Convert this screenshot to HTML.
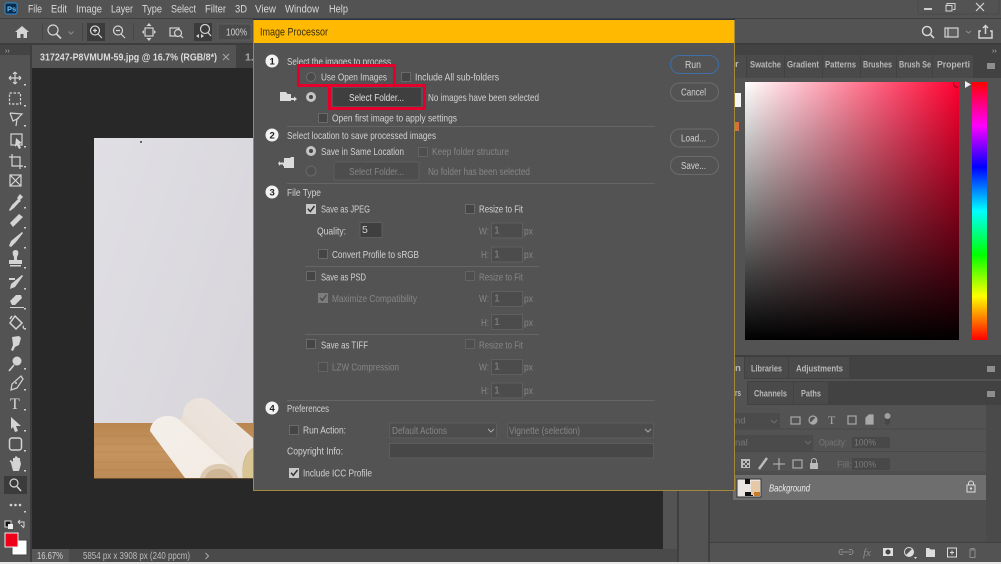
<!DOCTYPE html>
<html><head><meta charset="utf-8"><style>
html,body{margin:0;padding:0;background:#535353;width:1001px;height:564px;overflow:hidden}
svg{display:block;filter:blur(.3px)}
text{font-family:"Liberation Sans",sans-serif;font-size:10.5px;fill:#d2d2d2}
.d{fill:#868686}
.m{fill:#d8d8d8;font-size:11px}
.b{font-weight:bold;fill:#b8b8b8;font-size:9.5px}
.i{fill:none;stroke:#d4d4d4;stroke-width:1.2}
.f{fill:#d4d4d4;stroke:none}
.ck{fill:#454545;stroke:#6a6a6a;stroke-width:1}
.ckd{fill:#4e4e4e;stroke:#636363;stroke-width:1}
.in{fill:#4c4c4c;stroke:#5f5f5f;stroke-width:1}
.ln{stroke:#656565;stroke-width:1}
</style></head><body>
<svg width="1001" height="564" viewBox="0 0 1001 564" xmlns="http://www.w3.org/2000/svg">
<defs>
<linearGradient id="h" x1="0" x2="1" y1="0" y2="0"><stop offset="0" stop-color="#fff"/><stop offset="1" stop-color="#ff0030"/></linearGradient>
<linearGradient id="v" x1="0" x2="0" y1="0" y2="1"><stop offset="0" stop-color="#000" stop-opacity="0"/><stop offset="1" stop-color="#000"/></linearGradient>
<linearGradient id="hue" x1="0" x2="0" y1="0" y2="1"><stop offset="0" stop-color="#f00"/><stop offset=".17" stop-color="#f0f"/><stop offset=".33" stop-color="#00f"/><stop offset=".5" stop-color="#0ff"/><stop offset=".67" stop-color="#0f0"/><stop offset=".83" stop-color="#ff0"/><stop offset="1" stop-color="#f00"/></linearGradient>
<linearGradient id="wall" x1="0" x2="1" y1="0" y2="0.6"><stop offset="0" stop-color="#e0dfe4"/><stop offset="1" stop-color="#d8d6db"/></linearGradient>
<linearGradient id="wood" x1="0" x2="0" y1="0" y2="1"><stop offset="0" stop-color="#b98650"/><stop offset=".5" stop-color="#c6955f"/><stop offset="1" stop-color="#bb8955"/></linearGradient>
<linearGradient id="r1" x1="0" x2="1" y1="0" y2="1"><stop offset="0" stop-color="#f4efea"/><stop offset="1" stop-color="#f3ebe3"/></linearGradient>
<linearGradient id="r2" x1="1" x2="0" y1="0" y2="1"><stop offset="0" stop-color="#ece5e0"/><stop offset=".55" stop-color="#ebe2da"/><stop offset="1" stop-color="#dcc7a8"/></linearGradient>
</defs>

<!-- base -->
<rect width="1001" height="564" fill="#535353"/>
<rect y="18" width="1001" height="1" fill="#3f3f3f"/>
<rect y="43" width="1001" height="2" fill="#3d3d3d"/>
<rect x="30" y="45" width="680" height="23" fill="#414141"/>
<rect x="32" y="45" width="204" height="23" fill="#535353"/>
<rect x="32" y="68" width="631" height="481" fill="#282828"/>
<rect x="0" y="45" width="30" height="519" fill="#535353"/>
<rect x="30" y="45" width="2" height="519" fill="#3e3e3e"/>
<rect x="0" y="45" width="30" height="10" fill="#444"/>
<rect x="677" y="68" width="2" height="494" fill="#3f3f3f"/>
<rect x="708" y="45" width="2" height="517" fill="#3f3f3f"/>
<rect x="32" y="549" width="645" height="13" fill="#4a4a4a"/>
<rect x="32" y="549" width="37" height="13" fill="#575757"/>
<rect y="562" width="1001" height="2" fill="#e8e8e8"/>

<!-- photo -->
<rect x="94" y="138" width="170" height="286" fill="url(#wall)"/>
<rect x="140" y="141" width="2" height="2" fill="#666"/>
<rect x="94" y="423" width="170" height="56" fill="url(#wood)"/>
<path d="M94 436H150M94 444H165M94 452H172M94 462H180M94 470H188" stroke="#a87744" stroke-opacity=".35" fill="none"/>
<rect x="94" y="478" width="170" height="1" fill="#6a5030"/>
<path d="M183 414C184 403 192 398 201 398C207 398 212 402 217 407L253 438V448C245 452 241 465 243 478H237L180 422Z" fill="url(#r2)"/>
<path d="M253 448C246 452 241 465 243 478H253Z" fill="#d9c594"/>
<path d="M150 431C151 421 159 416 168 416C174 416 178 418 183 423L229 465L238 478H185Z" fill="url(#r1)"/>
<path d="M200 478C202 468 212 463 222 464C230 465 236 471 238 478Z" fill="#dccab2"/>
<path d="M205 478C207 471 214 468 221 469C227 470 231 474 233 478Z" fill="#cdb596"/>

<!-- top menu -->
<rect x="5" y="3" width="12" height="11" rx="2" fill="#0a2a4a" stroke="#2f8fd8" stroke-width="1"/>
<text x="7" y="11.500" style="font-size:7.500px;font-weight:bold;fill:#6cc0f8">Ps</text>
<text class="m" x="28" y="12.500" textLength="14" lengthAdjust="spacingAndGlyphs">File</text>
<text class="m" x="51" y="12.500" textLength="16" lengthAdjust="spacingAndGlyphs">Edit</text>
<text class="m" x="76" y="12.500" textLength="26" lengthAdjust="spacingAndGlyphs">Image</text>
<text class="m" x="111" y="12.500" textLength="22" lengthAdjust="spacingAndGlyphs">Layer</text>
<text class="m" x="142" y="12.500" textLength="20" lengthAdjust="spacingAndGlyphs">Type</text>
<text class="m" x="171" y="12.500" textLength="25" lengthAdjust="spacingAndGlyphs">Select</text>
<text class="m" x="205" y="12.500" textLength="21" lengthAdjust="spacingAndGlyphs">Filter</text>
<text class="m" x="235" y="12.500" textLength="12" lengthAdjust="spacingAndGlyphs">3D</text>
<text class="m" x="255" y="12.500" textLength="21" lengthAdjust="spacingAndGlyphs">View</text>
<text class="m" x="285" y="12.500" textLength="34" lengthAdjust="spacingAndGlyphs">Window</text>
<text class="m" x="329" y="12.500" textLength="19" lengthAdjust="spacingAndGlyphs">Help</text>

<!-- window buttons -->
<rect x="918" y="-2" width="81" height="16" rx="2" fill="none" stroke="#4a4a4a"/>
<rect x="924" y="8" width="8" height="2" fill="#cfcfcf"/>
<path class="i" d="M947 5V3.500H955V9.500H953M946 5.500H952V11H946Z" style="stroke-width:1"/>
<path class="i" d="M976 3L984 11M984 3L976 11"/>

<!-- options bar -->
<path class="f" d="M22 26L29 32H27V38H23.500V34H20.500V38H17V32H15Z"/>
<rect x="42" y="23" width="1" height="18" fill="#454545"/>
<circle cx="53" cy="30" r="5" class="i"/><path class="i" d="M56.500 34L61 38.500" style="stroke-width:1.600"/>
<path class="i" d="M68.500 31.500L71 34L73.500 31.500" style="stroke:#8f8f8f;stroke-width:1"/>
<rect x="82" y="23" width="1" height="18" fill="#454545"/>
<rect x="87" y="23" width="18" height="18" fill="#3b3b3b"/>
<circle cx="95" cy="30.500" r="4.500" class="i"/><path class="i" d="M98 34L102 38M93 30.500H97M95 28.500V32.500"/>
<circle cx="118" cy="30.500" r="4.500" class="i"/><path class="i" d="M121 34L125 38M116 30.500H120"/>
<rect x="133" y="23" width="1" height="18" fill="#454545"/>
<rect x="145" y="28" width="8" height="8" class="i"/><path class="f" d="M149 23L151.500 26H146.500ZM149 41L146.500 38H151.500ZM142 32L144 30V34ZM156 32L154 30V34Z"/>
<rect x="170" y="28" width="9" height="8" class="i"/><circle cx="178" cy="33" r="3.500" class="i" style="fill:#535353"/><path class="i" d="M180.500 35.500L183 38"/>
<rect x="194" y="23" width="18" height="18" fill="#3b3b3b"/>
<circle cx="205" cy="29" r="4.500" class="i"/><path class="i" d="M208 32.500L211 36"/><path class="f" d="M196 36L199 34V38ZM204 36L201 34V38Z"/>
<rect x="218" y="24" width="33" height="16" fill="#4a4a4a" stroke="#5c5c5c"/>
<text x="226" y="35.500" textLength="21" lengthAdjust="spacingAndGlyphs" style="font-size:10px">100%</text>

<circle cx="927" cy="31" r="4.500" class="i" style="stroke-width:1.500"/><path class="i" d="M930.500 34.500L934 38" style="stroke-width:1.600"/>
<rect x="945" y="28" width="13" height="9" class="i" style="fill:#5f5f5f"/><path class="i" d="M948 28V37"/>
<path class="i" d="M966 31L968.500 33L971 31" style="stroke:#8f8f8f;stroke-width:1"/>
<path class="i" d="M981 31H979V38H992V31H990M985.500 34V26M983 28L985.500 25.500L988 28" style="stroke-width:1.500"/>

<!-- doc tab -->
<text x="40" y="60.500" textLength="177" lengthAdjust="spacingAndGlyphs" style="font-weight:bold;font-size:10.500px;fill:#dcdcdc">317247-P8VMUM-59.jpg @ 16.7% (RGB/8*)</text>
<path d="M223 54L229 60M229 54L223 60" stroke="#a8a8a8" fill="none"/>
<text x="245" y="60.500" style="fill:#a8a8a8;font-weight:bold">1.</text>
<text x="5" y="53" style="font-size:7px;fill:#bbb">››</text>

<!-- tools -->
<g>
<path class="i" d="M15 72V84M9 78H21M15 72L13 74M15 72L17 74M15 84L13 82M15 84L17 82M9 78L11 76M9 78L11 80M21 78L19 76M21 78L19 80"/>
<rect x="9.500" y="93" width="11" height="11" class="i" stroke-dasharray="2.500 1.500"/>
<path class="i" d="M10 113L22 114L17 119L16 126M10 113L13 121L19 118"/>
<rect x="11" y="134" width="11" height="11" class="i"/><path class="f" d="M16 138L22 143L19 144L21 148L19 149L17 145L15 147Z"/>
<path class="i" d="M12 154V166H23M9 157H20V169"/>
<rect x="10" y="175" width="11" height="11" class="i"/><path class="i" d="M10 175L21 186M21 175L10 186"/>
<path class="f" d="M20 194L23 197L20 200L21 201L19.500 202L14 208L10 211L9 210L12 205L18 199L17 198Z"/>
<path class="f" d="M10 223L19 214L23 217L13 227Z"/>
<path class="f" d="M22 232L23 233L16 242L11 247L9 246L11 241Z"/>
<path class="f" d="M13 251Q16 249 18 251Q19 254 17 257L17 260H22V264H9V260H14V257Q12 254 13 251Z"/><rect x="10" y="265" width="11" height="1.500" class="f"/>
<path class="f" d="M22 275L23 276L15 287L10 289L11 284ZM9 278H15V280H9Z"/>
<path class="f" d="M10 301L16 295H21L22 298L15 305H12ZM10 307H24V308H10Z"/>
<path class="i" d="M15 316L22 323L16 329L10 323ZM10 319L12 316" style="stroke-width:1.500"/><path class="f" d="M23 325Q25 328 23.500 329Q22 328 23 325Z"/>
<path class="f" d="M12 337L19 336L21 338L19 345L15 347L13 351L11 350L13 345Z"/>
<circle cx="17" cy="361" r="4.500" class="f"/><path class="i" d="M14 365L9 371" style="stroke-width:1.600"/>
<path class="i" d="M21 376L23 379L17 388L11 390L12 384Z"/><circle cx="16" cy="383" r="1" class="f"/>
<text x="10" y="409" style="font-family:'Liberation Serif',serif;font-size:16px;fill:#d4d4d4">T</text>
<path class="f" d="M11 417L21 426L16 426L18 431L15 432L13 427L11 429Z"/>
<rect x="9.500" y="438" width="12" height="12" rx="2.500" class="i" style="stroke-width:1.500"/>
<path class="f" d="M11 463L9.500 461L11 460L13 462V458L15 458V456.500L17 456.500L18 458H20V460L21 464L19 471H13Z"/>
<rect x="4" y="476" width="23" height="18" fill="#3b3b3b"/>
<circle cx="14" cy="483" r="4" class="i"/><path class="i" d="M17 486.500L21 491" style="stroke-width:1.600"/>
<circle cx="11" cy="505" r="1.300" class="f"/><circle cx="15.500" cy="505" r="1.300" class="f"/><circle cx="20" cy="505" r="1.300" class="f"/>
<rect x="5" y="521" width="6" height="6" fill="#111" stroke="#ddd"/><rect x="8" y="524" width="5" height="5" fill="#eee"/>
<path class="i" d="M18 522H24V527M21 525L24 528M18 522L20 520M18 522L20 524" style="stroke-width:1"/>
<rect x="12" y="540" width="15" height="15" fill="#fff" stroke="#444"/>
<rect x="5" y="533" width="13" height="14" fill="#f00018" stroke="#eee"/>
<g fill="#cfcfcf"><rect x="24" y="84" width="2" height="1.500"/><rect x="24" y="105" width="2" height="1.500"/><rect x="24" y="125" width="2" height="1.500"/><rect x="24" y="146" width="2" height="1.500"/><rect x="24" y="166" width="2" height="1.500"/><rect x="24" y="207" width="2" height="1.500"/><rect x="24" y="227" width="2" height="1.500"/><rect x="24" y="247" width="2" height="1.500"/><rect x="24" y="267" width="2" height="1.500"/><rect x="24" y="288" width="2" height="1.500"/><rect x="24" y="308" width="2" height="1.500"/><rect x="24" y="328" width="2" height="1.500"/><rect x="24" y="368" width="2" height="1.500"/><rect x="24" y="389" width="2" height="1.500"/><rect x="24" y="409" width="2" height="1.500"/><rect x="24" y="430" width="2" height="1.500"/><rect x="24" y="450" width="2" height="1.500"/><rect x="24" y="470" width="2" height="1.500"/><rect x="24" y="511" width="2" height="1.500"/></g>
</g>

<!-- status -->
<text x="37" y="559" textLength="26" lengthAdjust="spacingAndGlyphs" style="font-size:10px">16.67%</text>
<text x="83" y="559" textLength="107" lengthAdjust="spacingAndGlyphs" style="font-size:10px;fill:#bcbcbc">5854 px x 3908 px (240 ppcm)</text>
<path d="M205.500 553L208.500 556L205.500 559" fill="none" stroke="#aaa"/>

<!-- right panels -->
<rect x="710" y="45" width="291" height="10" fill="#424242"/>
<text x="992" y="53" style="font-size:7px;fill:#bbb">››</text>
<rect x="710" y="55" width="291" height="23" fill="#424242"/>
<rect x="735" y="55" width="11" height="23" fill="#4c4c4c"/>
<text class="b" x="735" y="67">r</text>
<g fill="#4a4a4a"><rect x="747" y="55" width="37" height="23"/><rect x="785" y="55" width="37" height="23"/><rect x="823" y="55" width="37" height="23"/><rect x="861" y="55" width="35" height="23"/><rect x="897" y="55" width="35" height="23"/><rect x="933" y="55" width="40" height="23"/></g>
<text class="b" x="750" y="67.500" textLength="31" lengthAdjust="spacingAndGlyphs">Swatche</text>
<text class="b" x="787" y="67.500" textLength="32" lengthAdjust="spacingAndGlyphs">Gradient</text>
<text class="b" x="825" y="67.500" textLength="31" lengthAdjust="spacingAndGlyphs">Patterns</text>
<text class="b" x="863" y="67.500" textLength="29" lengthAdjust="spacingAndGlyphs">Brushes</text>
<text class="b" x="899" y="67.500" textLength="32" lengthAdjust="spacingAndGlyphs">Brush Se</text>
<text class="b" x="937" y="67.500" textLength="33" lengthAdjust="spacingAndGlyphs">Properti</text>
<rect x="987" y="63" width="8" height="6" fill="#8e8e8e"/>
<rect x="745" y="82" width="214" height="258" fill="url(#h)"/>
<rect x="745" y="82" width="214" height="258" fill="url(#v)"/>
<rect x="972" y="82" width="15" height="258" fill="url(#hue)"/>
<path d="M965 81L971 84.500L965 88Z" fill="#eee"/>
<path d="M954 82A3.500 3.500 0 0 0 958 87" fill="none" stroke="#7a0a20"/>
<rect x="735" y="93" width="6" height="14" fill="#f5f5f5"/>
<rect x="735" y="122" width="4" height="9" fill="#d8703a"/>

<rect x="710" y="355" width="291" height="2" fill="#3f3f3f"/>
<rect x="710" y="357" width="291" height="22" fill="#424242"/>
<rect x="735" y="357" width="9" height="22" fill="#535353"/>
<text class="b" x="735" y="371">n</text>
<rect x="745" y="357" width="43" height="21" fill="#4a4a4a"/>
<rect x="789" y="357" width="60" height="21" fill="#4a4a4a"/>
<text class="b" x="751" y="371.500" textLength="31" lengthAdjust="spacingAndGlyphs">Libraries</text>
<text class="b" x="796" y="371.500" textLength="47" lengthAdjust="spacingAndGlyphs">Adjustments</text>
<rect x="987" y="366" width="8" height="6" fill="#8e8e8e"/>
<rect x="710" y="381" width="291" height="24" fill="#424242"/>
<rect x="735" y="381" width="12" height="24" fill="#535353"/>
<text class="b" x="735" y="396" textLength="6" lengthAdjust="spacingAndGlyphs">rs</text>
<rect x="748" y="382" width="45" height="22" fill="#4a4a4a"/>
<rect x="794" y="382" width="34" height="22" fill="#4a4a4a"/>
<text class="b" x="754" y="396.500" textLength="33" lengthAdjust="spacingAndGlyphs">Channels</text>
<text class="b" x="801" y="396.500" textLength="20" lengthAdjust="spacingAndGlyphs">Paths</text>
<rect x="987" y="391" width="8" height="6" fill="#8e8e8e"/>

<rect x="710" y="405" width="291" height="157" fill="#4e4e4e"/>
<rect x="710" y="405" width="291" height="66" fill="#535353"/>
<rect x="735" y="428.500" width="266" height="1" fill="#484848"/>
<rect x="735" y="451" width="266" height="1" fill="#484848"/>
<rect x="735" y="413" width="45" height="16" fill="#4b4b4b"/>
<text x="735" y="423.500" style="font-size:9.500px;fill:#777">nd</text>
<path d="M771 420L774 423L777 420" stroke="#6f6f6f" fill="none"/>
<rect x="791" y="417" width="9" height="7" class="i" style="stroke:#a8a8a8"/>
<circle cx="813" cy="420" r="4" class="i" style="stroke:#a8a8a8"/><path d="M813 416A4 4 0 0 1 813 424Z" fill="#a8a8a8" transform="rotate(45 813 420)"/>
<text x="828" y="424" style="font-family:'Liberation Serif',serif;font-size:12px;fill:#a8a8a8">T</text>
<rect x="848" y="416" width="8" height="8" class="i" style="stroke:#a8a8a8"/>
<path d="M866 424V418L869 415H873V424Z" class="i" style="stroke:#a8a8a8;fill:#a8a8a8"/>
<rect x="885" y="416" width="5" height="9" rx="2.500" fill="#474747"/><circle cx="887.500" cy="416" r="3" fill="#a0a0a0"/>
<rect x="735" y="435" width="78" height="16" fill="#4b4b4b"/>
<text x="735" y="445.500" style="font-size:9.500px;fill:#777">nal</text>
<path d="M805 441L808 444L811 441" stroke="#6f6f6f" fill="none"/>
<text x="819" y="445.500" textLength="28" lengthAdjust="spacingAndGlyphs" style="font-size:9.500px;fill:#777">Opacity:</text>
<rect x="852" y="437" width="38" height="11" fill="#484848"/>
<text x="854" y="445.500" textLength="22" lengthAdjust="spacingAndGlyphs" style="font-size:9.500px;fill:#7c7c7c">100%</text>
<rect x="741" y="459" width="9" height="9" fill="#bbb"/><g fill="#535353"><rect x="743" y="461" width="2" height="2"/><rect x="747" y="461" width="2" height="2"/><rect x="745" y="463" width="2" height="2"/><rect x="743" y="465" width="2" height="2"/><rect x="747" y="465" width="2" height="2"/></g>
<path d="M767 458L759 469" stroke="#bbb" stroke-width="2.500"/>
<path d="M779 458V470M773 464H785" stroke="#bbb" fill="none"/>
<rect x="793" y="460" width="9" height="8" class="i" style="stroke:#aaa"/>
<rect x="810" y="463" width="8" height="6" fill="#bbb"/><path d="M811.500 463V461A2.500 2.500 0 0 1 816.500 461V463" fill="none" stroke="#bbb"/>
<text x="837" y="467.500" style="font-size:9.500px;fill:#777">Fill:</text>
<rect x="852" y="458" width="38" height="12" fill="#484848"/>
<text x="854" y="467.500" textLength="22" lengthAdjust="spacingAndGlyphs" style="font-size:9.500px;fill:#7c7c7c">100%</text>
<rect x="733" y="475" width="253" height="25" fill="#6e6e6e"/>
<rect x="737" y="479" width="24" height="18" fill="#e9e4e0" stroke="#333"/>
<rect x="745" y="479" width="5" height="5" fill="#111"/><rect x="745" y="492" width="8" height="4" fill="#111"/><rect x="751" y="481" width="9" height="14" fill="#e7c8a6"/><rect x="754" y="492" width="6" height="4" fill="#c87a2a"/>
<text x="769" y="491.500" textLength="41" lengthAdjust="spacingAndGlyphs" style="font-style:italic;font-size:10.500px;fill:#eee">Background</text>
<rect x="967" y="485" width="8" height="7" fill="none" stroke="#ddd"/><path d="M968.500 485V483.500A2.500 2.500 0 0 1 973.500 483.500V485" fill="none" stroke="#ddd"/><rect x="970" y="487.500" width="2" height="2" fill="#ddd"/>
<rect x="986" y="405" width="15" height="138" fill="#4a4a4a"/>
<rect x="710" y="542" width="291" height="1" fill="#3f3f3f"/>
<rect x="710" y="543" width="291" height="19" fill="#535353"/>
<path d="M841 552H851M843 549.500H841.500A2.500 2.500 0 0 0 841.500 554.500H843M849 549.500H850.500A2.500 2.500 0 0 1 850.500 554.500H849" stroke="#8e8e8e" fill="none"/>
<text x="863" y="556" style="font-family:'Liberation Serif',serif;font-style:italic;font-size:11px;fill:#8e8e8e">fx</text>
<rect x="883" y="548" width="10" height="8" fill="#ddd"/><circle cx="888" cy="552" r="2.500" fill="#444"/>
<circle cx="909" cy="552" r="4.500" fill="none" stroke="#ddd"/><path d="M909 547.500A4.500 4.500 0 0 1 909 556.500Z" fill="#ddd" transform="rotate(45 909 552)"/><path d="M914 557L917 557L915.500 559Z" fill="#ddd"/>
<path d="M926 548H929L930.500 549.500H935V557H926Z" fill="#ddd"/>
<rect x="947.500" y="548" width="9" height="9" fill="none" stroke="#ddd"/><path d="M950 552.500H954M952 550.500V554.500" stroke="#ddd"/>
<path d="M969 550H976M970 551V557.500H975V551M971 550V548.500H974V550" stroke="#8e8e8e" fill="none"/>

<!-- dialog -->
<rect x="253.500" y="19.500" width="481" height="471" fill="#535353" stroke="#a5893a"/>
<rect x="253" y="19" width="482" height="1" fill="#28344c"/>
<rect x="254" y="20" width="480" height="23" fill="#ffb900"/>
<text x="260" y="35.500" textLength="68" lengthAdjust="spacingAndGlyphs" style="font-size:11px;fill:#3a2f10">Image Processor</text>

<g><circle cx="272" cy="61" r="6.500" fill="#f2f2f2"/><text x="269.500" y="64.500" style="font-size:9.500px;font-weight:bold;fill:#222">1</text>
<circle cx="272" cy="135" r="6.500" fill="#f2f2f2"/><text x="269.500" y="138.500" style="font-size:9.500px;font-weight:bold;fill:#222">2</text>
<circle cx="272" cy="192" r="6.500" fill="#f2f2f2"/><text x="269.500" y="195.500" style="font-size:9.500px;font-weight:bold;fill:#222">3</text>
<circle cx="272" cy="408" r="6.500" fill="#f2f2f2"/><text x="269.500" y="411.500" style="font-size:9.500px;font-weight:bold;fill:#222">4</text></g>

<!-- section 1 -->
<text x="287" y="65" textLength="104" lengthAdjust="spacingAndGlyphs">Select the images to process</text>
<circle cx="311" cy="77" r="4.500" fill="#4a4a4a" stroke="#6d6d6d"/>
<text x="321" y="80.500" textLength="66" lengthAdjust="spacingAndGlyphs">Use Open Images</text>
<rect x="401.500" y="72.500" width="9" height="9" class="ck"/>
<text x="415" y="80.500" textLength="84" lengthAdjust="spacingAndGlyphs">Include All sub-folders</text>
<path class="f" d="M280 92H286L287.500 94H291V98H294V96.500L297 99L294 101.500V100H291V101H280Z" style="fill:#dcdcdc"/>
<circle cx="311" cy="97" r="5" fill="#c4c4c4"/><circle cx="311" cy="97" r="2" fill="#444"/>
<rect x="333" y="88" width="88" height="18" rx="1" fill="#3f3f3f"/>
<text x="349" y="101" textLength="55" lengthAdjust="spacingAndGlyphs" style="fill:#e0e0e0">Select Folder...</text>
<text x="428" y="101" textLength="111" lengthAdjust="spacingAndGlyphs">No images have been selected</text>
<rect x="318.500" y="113.500" width="9" height="9" class="ck"/>
<text x="332" y="121.500" textLength="125" lengthAdjust="spacingAndGlyphs">Open first image to apply settings</text>
<path class="ln" d="M287 126.500H655"/>
<rect x="298.500" y="65.500" width="96" height="20" fill="none" stroke="#e4002b" stroke-width="3"/>
<rect x="329.500" y="85.500" width="95" height="23" fill="none" stroke="#e4002b" stroke-width="3"/>

<!-- section 2 -->
<text x="287" y="139" textLength="149" lengthAdjust="spacingAndGlyphs">Select location to save processed images</text>
<circle cx="311" cy="151" r="5" fill="#c4c4c4"/><circle cx="311" cy="151" r="2" fill="#444"/>
<text x="321" y="155" textLength="83" lengthAdjust="spacingAndGlyphs">Save in Same Location</text>
<rect x="418.500" y="147.500" width="9" height="9" class="ckd"/>
<text class="d" x="432" y="155" textLength="77" lengthAdjust="spacingAndGlyphs">Keep folder structure</text>
<path class="f" d="M284 158H290L291 157H294V168H284V166H283V164.500H280V166L278 163.500L280 161V162.500H284Z" style="fill:#dcdcdc"/>
<circle cx="311" cy="171" r="5" fill="#4f4f4f" stroke="#686868"/>
<rect x="334" y="162" width="85" height="18" rx="1" fill="#4d4d4d" stroke="#5d5d5d"/>
<text class="d" x="349" y="175" textLength="55" lengthAdjust="spacingAndGlyphs">Select Folder...</text>
<text class="d" x="428" y="175" textLength="102" lengthAdjust="spacingAndGlyphs">No folder has been selected</text>
<path class="ln" d="M287 183.500H655"/>

<!-- section 3 -->
<text x="287" y="196" textLength="34" lengthAdjust="spacingAndGlyphs">File Type</text>
<rect x="306" y="204" width="10" height="10" fill="#c8c8c8"/><path d="M307.800 208.800L310.300 211.500L314.500 206" stroke="#333" stroke-width="1.500" fill="none"/>
<text x="321" y="212.500" textLength="49" lengthAdjust="spacingAndGlyphs">Save as JPEG</text>
<rect x="465.500" y="204.500" width="9" height="9" class="ck"/>
<text x="479" y="212.500" textLength="44" lengthAdjust="spacingAndGlyphs">Resize to Fit</text>
<text x="317" y="234.500" textLength="29" lengthAdjust="spacingAndGlyphs">Quality:</text>
<rect x="360" y="222.500" width="22" height="15" fill="#3f3f3f" stroke="#5f5f5f"/>
<text x="362" y="233">5</text>
<text class="d" x="479" y="234.500" textLength="10" lengthAdjust="spacingAndGlyphs">W:</text>
<rect class="in" x="491.500" y="223" width="31" height="15"/><text class="d" x="494" y="233.500">1</text>
<text class="d" x="524" y="234.500" textLength="9" lengthAdjust="spacingAndGlyphs">px</text>
<rect x="318.500" y="249.500" width="9" height="9" class="ck"/>
<text x="332" y="258" textLength="87" lengthAdjust="spacingAndGlyphs">Convert Profile to sRGB</text>
<text class="d" x="481" y="258" textLength="8" lengthAdjust="spacingAndGlyphs">H:</text>
<rect class="in" x="491.500" y="247" width="31" height="15"/><text class="d" x="494" y="257.500">1</text>
<text class="d" x="524" y="258" textLength="9" lengthAdjust="spacingAndGlyphs">px</text>
<path class="ln" d="M305 266.500H539"/>

<rect x="306.500" y="271.500" width="9" height="9" class="ck"/>
<text x="321" y="280.500" textLength="45" lengthAdjust="spacingAndGlyphs">Save as PSD</text>
<rect x="465.500" y="271.500" width="9" height="9" class="ckd"/>
<text class="d" x="479" y="280.500" textLength="44" lengthAdjust="spacingAndGlyphs">Resize to Fit</text>
<rect x="318" y="293" width="10" height="10" fill="#7d7d7d"/><path d="M320 297.800L322.300 300.300L326.300 295" stroke="#4a4a4a" stroke-width="1.400" fill="none"/>
<text class="d" x="332" y="302" textLength="85" lengthAdjust="spacingAndGlyphs">Maximize Compatibility</text>
<text class="d" x="479" y="302" textLength="10" lengthAdjust="spacingAndGlyphs">W:</text>
<rect class="in" x="491.500" y="291.500" width="31" height="15"/><text class="d" x="494" y="301.500">1</text>
<text class="d" x="524" y="302" textLength="9" lengthAdjust="spacingAndGlyphs">px</text>
<text class="d" x="481" y="326" textLength="8" lengthAdjust="spacingAndGlyphs">H:</text>
<rect class="in" x="491.500" y="314.500" width="31" height="15"/><text class="d" x="494" y="325">1</text>
<text class="d" x="524" y="326" textLength="9" lengthAdjust="spacingAndGlyphs">px</text>
<path class="ln" d="M305 334.500H539"/>

<rect x="306.500" y="339.500" width="9" height="9" class="ck"/>
<text x="321" y="348.500" textLength="47" lengthAdjust="spacingAndGlyphs">Save as TIFF</text>
<rect x="465.500" y="339.500" width="9" height="9" class="ckd"/>
<text class="d" x="479" y="348.500" textLength="44" lengthAdjust="spacingAndGlyphs">Resize to Fit</text>
<rect x="318.500" y="362.500" width="9" height="9" class="ckd"/>
<text class="d" x="332" y="370.500" textLength="67" lengthAdjust="spacingAndGlyphs">LZW Compression</text>
<text class="d" x="479" y="370.500" textLength="10" lengthAdjust="spacingAndGlyphs">W:</text>
<rect class="in" x="491.500" y="359.500" width="31" height="15"/><text class="d" x="494" y="369.500">1</text>
<text class="d" x="524" y="370.500" textLength="9" lengthAdjust="spacingAndGlyphs">px</text>
<text class="d" x="481" y="394" textLength="8" lengthAdjust="spacingAndGlyphs">H:</text>
<rect class="in" x="491.500" y="383" width="31" height="15"/><text class="d" x="494" y="393.500">1</text>
<text class="d" x="524" y="394" textLength="9" lengthAdjust="spacingAndGlyphs">px</text>
<path class="ln" d="M287 400.500H655"/>

<!-- section 4 -->
<text x="287" y="412" textLength="42" lengthAdjust="spacingAndGlyphs">Preferences</text>
<rect x="289.500" y="425.500" width="9" height="9" class="ck"/>
<text x="303" y="433.500" textLength="43" lengthAdjust="spacingAndGlyphs">Run Action:</text>
<rect x="389.500" y="423" width="107" height="15" rx="1" fill="#4d4d4d" stroke="#5d5d5d"/>
<text class="d" x="392" y="434" textLength="55" lengthAdjust="spacingAndGlyphs">Default Actions</text>
<path d="M488 429L491 432L494 429" stroke="#a8a8a8" fill="none"/>
<rect x="507.500" y="423" width="146" height="15" rx="1" fill="#4d4d4d" stroke="#5d5d5d"/>
<text class="d" x="509" y="434" textLength="71" lengthAdjust="spacingAndGlyphs">Vignette (selection)</text>
<path d="M645 429L648 432L651 429" stroke="#a8a8a8" fill="none"/>
<text x="287" y="454.500" textLength="56" lengthAdjust="spacingAndGlyphs">Copyright Info:</text>
<rect x="389.500" y="443.500" width="264" height="14.500" fill="#474747" stroke="#5d5d5d"/>
<rect x="289" y="468" width="10" height="10" fill="#c8c8c8"/><path d="M291 472.800L293.300 475.300L297.500 470" stroke="#333" stroke-width="1.500" fill="none"/>
<text x="303" y="476.500" textLength="69" lengthAdjust="spacingAndGlyphs">Include ICC Profile</text>

<!-- side buttons -->
<rect x="670.500" y="55.500" width="48" height="18" rx="9" fill="#535353" stroke="#3f6ea8"/>
<text x="685" y="68" textLength="16" lengthAdjust="spacingAndGlyphs">Run</text>
<rect x="670.500" y="83" width="48" height="18" rx="9" fill="#535353" stroke="#6c6c6c"/>
<text x="681" y="95.500" textLength="25" lengthAdjust="spacingAndGlyphs">Cancel</text>
<rect x="670.500" y="129" width="48" height="18" rx="9" fill="#535353" stroke="#6c6c6c"/>
<text x="681" y="141.500" textLength="25" lengthAdjust="spacingAndGlyphs">Load...</text>
<rect x="670.500" y="156.500" width="48" height="18" rx="9" fill="#535353" stroke="#6c6c6c"/>
<text x="681" y="169" textLength="25" lengthAdjust="spacingAndGlyphs">Save...</text>
</svg>
</body></html>
